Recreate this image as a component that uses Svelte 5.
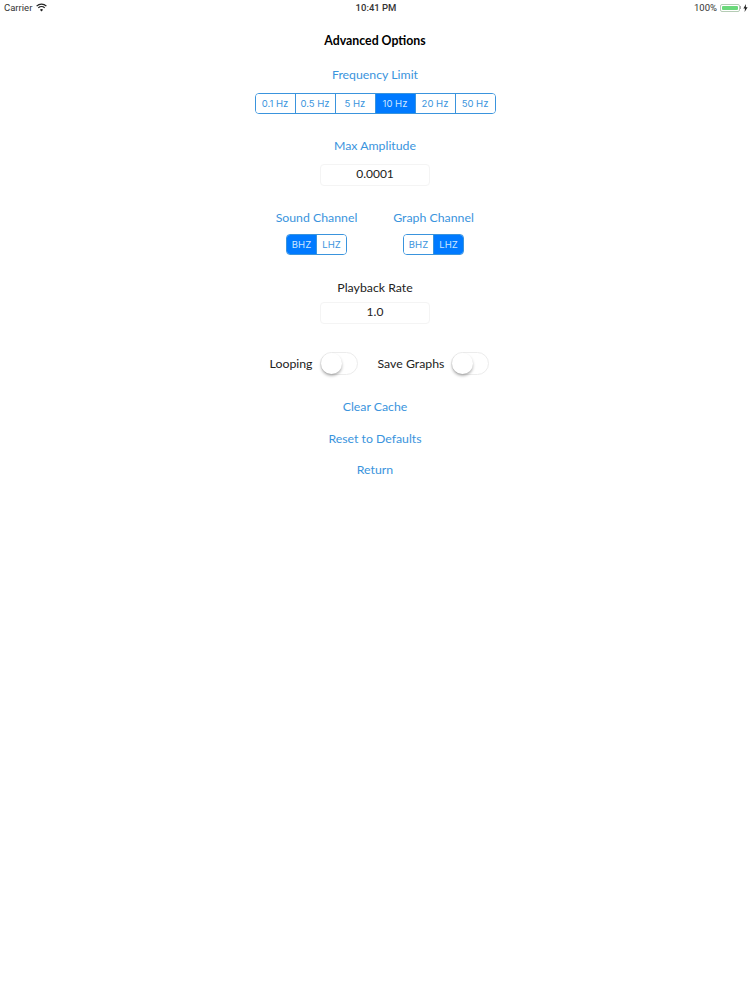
<script lang="ts">
  const freqs = ['0.1 Hz', '0.5 Hz', '5 Hz', '10 Hz', '20 Hz', '50 Hz'];
  const channels = ['BHZ', 'LHZ'];

  let freq = $state('10 Hz');
  let soundChannel = $state('BHZ');
  let graphChannel = $state('LHZ');
  let looping = $state(false);
  let saveGraphs = $state(false);
</script>

<div class="status-bar">
  <div class="carrier">
    <span>Carrier</span>
    <svg width="11" height="9" viewBox="0 0 11 9" fill="none" stroke="#222" stroke-width="1.3">
      <path d="M0.6 3.1a7 7 0 0 1 9.8 0" />
      <path d="M2.3 4.9a4.6 4.6 0 0 1 6.4 0" />
      <path d="M5.5 8.4 3.9 6.7a2.3 2.3 0 0 1 3.2 0z" fill="#222" stroke="none" />
    </svg>
  </div>
  <div class="clock">10:41 PM</div>
  <div class="battery">
    <span>100%</span>
    <div class="cell"><div class="charge"></div></div>
    <div class="nub"></div>
    <svg width="5" height="8" viewBox="0 0 5 8">
      <path d="M3 0 0.4 4.5H2L1.6 8 4.6 3.2H2.8z" fill="#222" />
    </svg>
  </div>
</div>

<main>
  <h1>Advanced Options</h1>

  <div class="label blue first">Frequency Limit</div>
  <div class="segments freq">
    {#each freqs as f}
      <button class:on={freq === f} onclick={() => (freq = f)}>{f}</button>
    {/each}
  </div>

  <div class="label blue amp">Max Amplitude</div>
  <input class="field" value="0.0001" />

  <div class="channels">
    <div class="channel">
      <div class="label blue">Sound Channel</div>
      <div class="segments small">
        {#each channels as c}
          <button class:on={soundChannel === c} onclick={() => (soundChannel = c)}>{c}</button>
        {/each}
      </div>
    </div>
    <div class="channel">
      <div class="label blue">Graph Channel</div>
      <div class="segments small">
        {#each channels as c}
          <button class:on={graphChannel === c} onclick={() => (graphChannel = c)}>{c}</button>
        {/each}
      </div>
    </div>
  </div>

  <div class="label rate">Playback Rate</div>
  <input class="field tight" value="1.0" />

  <div class="toggles">
    <span class="label">Looping</span>
    <button class="switch" class:on={looping} aria-label="Looping" onclick={() => (looping = !looping)}>
      <span class="knob"></span>
    </button>
    <span class="label save">Save Graphs</span>
    <button class="switch" class:on={saveGraphs} aria-label="Save Graphs" onclick={() => (saveGraphs = !saveGraphs)}>
      <span class="knob"></span>
    </button>
  </div>

  <div class="actions">
    <button class="link">Clear Cache</button>
    <button class="link">Reset to Defaults</button>
    <button class="link">Return</button>
  </div>
</main>

<style>
  :global(body) {
    background: #fff;
    font-family: Lato, "Noto Sans", sans-serif;
  }

  .status-bar {
    display: grid;
    grid-template-columns: 1fr auto 1fr;
    align-items: center;
    height: 15px;
    padding: 0 2px 0 4px;
    font-family: Roboto, "Liberation Sans", sans-serif;
    font-size: 9.5px;
    color: #333;
  }

  .carrier {
    display: flex;
    align-items: center;
    gap: 4px;
  }

  .clock {
    font-weight: 500;
  }

  .battery {
    display: flex;
    align-items: center;
    justify-content: flex-end;
    gap: 2px;
  }

  .cell {
    width: 20px;
    height: 8px;
    padding: 1px;
    box-sizing: border-box;
    border: 0.5px solid #b5ccb5;
    border-radius: 2px;
    margin-left: 1px;
  }

  .charge {
    height: 100%;
    background: #6ad87a;
    border-radius: 1px;
  }

  .nub {
    width: 1px;
    height: 3px;
    margin-left: -2px;
    background: #aaa;
  }

  main {
    display: flex;
    flex-direction: column;
    align-items: center;
  }

  h1 {
    margin: 18px 0 0;
    font-size: 12.3px;
    line-height: 16px;
    font-weight: bold;
    color: #000;
  }

  .label {
    font-size: 12.3px;
    line-height: 16px;
    color: #222;
    white-space: nowrap;
  }

  .blue {
    color: #3a94dd;
  }

  .first {
    margin-top: 18px;
  }

  .amp {
    margin-top: 24px;
  }

  .rate {
    margin-top: 25px;
  }

  .segments {
    display: flex;
    box-sizing: border-box;
    border: 1px solid #3a94dd;
    border-radius: 4px;
    overflow: hidden;
    background: #fff;
  }

  .freq {
    width: 241px;
    height: 21px;
    margin-top: 10px;
  }

  .small {
    width: 61px;
    height: 21px;
    margin-top: 8px;
  }

  .segments button {
    flex: 1;
    min-width: 0;
    padding: 0;
    border: none;
    border-left: 1px solid #3a94dd;
    background: #fff;
    color: #3a94dd;
    font-family: Inter, "Liberation Sans", sans-serif;
    font-size: 9.5px;
    cursor: pointer;
  }

  .segments button:first-child {
    border-left: none;
  }

  .segments button.on {
    background: #007aff;
    color: #cfe6ff;
  }

  .field {
    box-sizing: border-box;
    width: 110px;
    height: 22px;
    margin-top: 10px;
    padding: 0 0 3px;
    border: 1px solid #f4f4f4;
    border-radius: 4px;
    background: #fff;
    color: #222;
    text-align: center;
    font-family: Lato, "Noto Sans", sans-serif;
    font-size: 12px;
    outline: none;
  }

  .tight {
    margin-top: 6px;
  }

  .channels {
    display: flex;
    justify-content: center;
    gap: 35px;
    margin-top: 24px;
  }

  .channel {
    display: flex;
    flex-direction: column;
    align-items: center;
    width: 82px;
  }

  .toggles {
    display: flex;
    align-items: center;
    margin-top: 28px;
    margin-left: 9px;
    height: 23px;
  }

  .save {
    margin-left: 20px;
  }

  .switch {
    position: relative;
    box-sizing: border-box;
    width: 38px;
    height: 23px;
    margin-left: 7px;
    padding: 0;
    border: 1px solid #ececec;
    border-radius: 12px;
    background: #fff;
    cursor: pointer;
  }

  .switch.on {
    background: #4cd964;
    border-color: #4cd964;
  }

  .knob {
    position: absolute;
    top: 0;
    left: 0;
    width: 21px;
    height: 21px;
    border-radius: 50%;
    background: #fff;
    box-shadow: 0 2px 3px rgba(0, 0, 0, 0.3);
  }

  .switch.on .knob {
    left: 15px;
  }

  .actions {
    display: flex;
    flex-direction: column;
    align-items: center;
    gap: 15.5px;
    margin-top: 24px;
  }

  .link {
    padding: 0;
    border: none;
    background: none;
    color: #3a94dd;
    font-family: Lato, "Noto Sans", sans-serif;
    font-size: 12.3px;
    line-height: 16px;
    cursor: pointer;
  }
</style>
